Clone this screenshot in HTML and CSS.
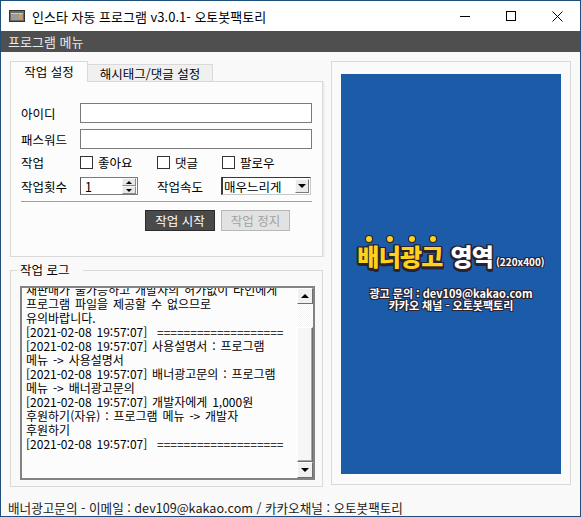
FILE: index.html
```html
<!DOCTYPE html>
<html lang="ko">
<head>
<meta charset="utf-8">
<title>인스타 자동 프로그램</title>
<link rel="stylesheet" href="styles.css">
</head>
<body>
<div class="window">
  <div class="titlebar">
    <svg class="app-icon" viewBox="0 0 16 12" width="16" height="12">
      <rect x="0.5" y="0.5" width="15" height="11" fill="#6a6a6a" stroke="#333"/>
      <rect x="2" y="3" width="12" height="7" fill="#9a9a9a"/>
      <rect x="2" y="3" width="12" height="1" fill="#c8c8c8"/>
      <rect x="10" y="5" width="3" height="4" fill="#e39a2a"/>
      <rect x="11" y="4" width="1" height="1" fill="#f2c24a"/>
    </svg>
    <span class="title">인스타 자동 프로그램 v3.0.1- 오토봇팩토리</span>
    <div class="controls">
      <span class="ctl"><svg width="10" height="10" viewBox="0 0 10 10"><line x1="0" y1="5.5" x2="10" y2="5.5" stroke="#000" stroke-width="1"/></svg></span>
      <span class="ctl"><svg width="10" height="10" viewBox="0 0 10 10"><rect x="0.5" y="0.5" width="9" height="9" fill="none" stroke="#000" stroke-width="1"/></svg></span>
      <span class="ctl"><svg width="11" height="11" viewBox="0 0 11 11"><path d="M0.5 0.5 L10.5 10.5 M10.5 0.5 L0.5 10.5" stroke="#000" stroke-width="1" fill="none"/></svg></span>
    </div>
  </div>
  <div class="menubar"><span>프로그램 메뉴</span></div>
  <div class="main">
    <div class="leftcol">
      <div class="tabs">
        <div class="tab tab-active">작업 설정</div>
        <div class="tab tab-idle">해시태그/댓글 설정</div>
      </div>
      <div class="tabpanel">
        <div class="row row-input">
          <span class="lbl">아이디</span>
          <span class="textbox"></span>
        </div>
        <div class="row row-input">
          <span class="lbl">패스워드</span>
          <span class="textbox"></span>
        </div>
        <div class="row row-check">
          <span class="lbl">작업</span>
          <span class="opt opt1"><span class="cb"></span>좋아요</span>
          <span class="opt opt2"><span class="cb"></span>댓글</span>
          <span class="opt"><span class="cb"></span>팔로우</span>
        </div>
        <div class="row row-spin">
          <span class="lbl">작업횟수</span>
          <span class="spin">
            <span class="spin-val">1</span>
            <span class="spin-btns">
              <span class="sb"><span class="tri-up"></span></span>
              <span class="sb"><span class="tri-down"></span></span>
            </span>
          </span>
          <span class="lbl2">작업속도</span>
          <span class="select">
            <span class="select-val">매우느리게</span>
            <span class="select-btn"><span class="tri-down big"></span></span>
          </span>
        </div>
        <div class="sep"></div>
        <div class="btnrow">
          <span class="btn btn-start">작업 시작</span>
          <span class="btn btn-stop">작업 정지</span>
        </div>
      </div>
      <fieldset class="logbox">
        <legend>작업 로그</legend>
        <div class="log">
          <div class="logtext">
            <div class="lines">
              <div class="ln">재판매가 불가능하고 개발자의 허가없이 타인에게</div>
              <div class="ln">프로그램 파일을 제공할 수 없으므로</div>
              <div class="ln">유의바랍니다.</div>
              <div class="ln">[2021-02-08 19:57:07]  <span class="rule">===================</span></div>
              <div class="ln">[2021-02-08 19:57:07] 사용설명서 : 프로그램</div>
              <div class="ln">메뉴 -&gt; 사용설명서</div>
              <div class="ln">[2021-02-08 19:57:07] 배너광고문의 : 프로그램</div>
              <div class="ln">메뉴 -&gt; 배너광고문의</div>
              <div class="ln">[2021-02-08 19:57:07] 개발자에게 1,000원</div>
              <div class="ln">후원하기(자유) : 프로그램 메뉴 -&gt; 개발자</div>
              <div class="ln">후원하기</div>
              <div class="ln">[2021-02-08 19:57:07]  <span class="rule">===================</span></div>
            </div>
          </div>
          <div class="vscroll">
            <span class="sbtn"><span class="tri-up big"></span></span>
            <span class="track"></span>
            <span class="thumb"></span>
            <span class="sbtn"><span class="tri-down big"></span></span>
          </div>
        </div>
      </fieldset>
    </div>
    <div class="adpanel">
      <div class="banner">
        <div class="ad-title">
          <span class="ad-yellow"><span class="syl">배</span><span class="syl">너</span><span class="syl">광</span><span class="syl">고</span></span>
          <span class="ad-white">영역</span>
          <span class="ad-size">(220x400)</span>
        </div>
        <div class="ad-line">광고 문의 : dev109@kakao.com</div>
        <div class="ad-line">카카오 채널 - 오토봇팩토리</div>
      </div>
    </div>
  </div>
  <div class="statusbar">배너광고문의 - 이메일 : dev109@kakao.com / 카카오채널 : 오토봇팩토리</div>
</div>
</body>
</html>
```

FILE: styles.css
```css
* { box-sizing: border-box; }

body {
  margin: 0;
  background: #ffffff;
  font-family: "Noto Sans CJK KR", "Noto Sans", sans-serif;
  color: #000;
}

.window {
  width: 581px;
  height: 517px;
  border: 1px solid #1d4f7a;
  background: #f9f9f9;
  display: flex;
  flex-direction: column;
  overflow: hidden;
}

/* title bar */
.titlebar {
  height: 30px;
  flex-shrink: 0;
  background: #ffffff;
  display: flex;
  align-items: center;
}
.app-icon { margin-left: 8px; flex-shrink: 0; }
.title {
  margin-left: 7px;
  font-size: 13px;
  line-height: 15px;
  color: #000;
}
.controls {
  margin-left: auto;
  display: flex;
  height: 100%;
}
.ctl {
  width: 46px;
  display: flex;
  align-items: center;
  justify-content: center;
}
.ctl svg { display: block; }

/* menu bar */
.menubar {
  height: 21px;
  flex-shrink: 0;
  background: #4f4f4f;
  color: #e9e9e9;
  font-size: 13px;
  display: flex;
  align-items: center;
  padding-left: 7px;
}

/* main */
.main {
  flex: 1;
  display: flex;
  padding: 9px 0 0 9px;
  gap: 8px;
}
.leftcol {
  width: 313px;
  display: flex;
  flex-direction: column;
}

/* tabs */
.tabs {
  height: 20px;
  display: flex;
  align-items: flex-end;
  position: relative;
  z-index: 1;
}
.tab {
  font-size: 12.5px;
  display: flex;
  align-items: center;
  justify-content: center;
  border: 1px solid #d9d9d9;
  border-bottom: none;
}
.tab-active {
  width: 78px;
  height: 21px;
  margin-bottom: -1px;
  background: #fcfcfc;
  padding-bottom: 1px;
}
.tab-idle {
  width: 125px;
  height: 17px;
  border-left: none;
  background: #f0f0f0;
}

.tabpanel {
  height: 176px;
  border: 1px solid #d9d9d9;
  background: #fcfcfc;
  padding: 21px 10px 0 10px;
  box-shadow: 1px 0 0 #ececec, 2px 0 0 #f1f1f1;
  font-size: 12.5px;
}
.row {
  display: flex;
  align-items: center;
}
.lbl { width: 59px; flex-shrink: 0; }
.row-input { height: 20px; margin-bottom: 6px; }
.textbox {
  width: 232px;
  height: 20px;
  border: 1px solid #7a7a7a;
  background: #ffffff;
}
.row-check { height: 18px; margin-top: -2px; }
.opt { display: flex; align-items: center; }
.opt1 { width: 77px; }
.opt2 { width: 65px; }
.cb {
  width: 13px;
  height: 13px;
  border: 1px solid #333;
  background: #fff;
  margin-right: 5px;
}
.row-spin { height: 18px; margin-top: 6px; }
.spin {
  width: 58px;
  height: 18px;
  border: 1px solid #7a7a7a;
  border-left-color: #555;
  background: #fff;
  display: flex;
  align-items: center;
  padding: 0 1px 0 4px;
}
.spin-val { flex: 1; }
.spin-btns {
  width: 14px;
  height: 16px;
  display: flex;
  flex-direction: column;
}
.sb {
  flex: 1;
  background: #e8e8e8;
  border: 1px solid;
  border-color: #f6f6f6 #8a8a8a #8a8a8a #f6f6f6;
  display: flex;
  align-items: center;
  justify-content: center;
}
.tri-up {
  width: 0; height: 0;
  border-left: 3px solid transparent;
  border-right: 3px solid transparent;
  border-bottom: 3px solid #000;
}
.tri-down {
  width: 0; height: 0;
  border-left: 3px solid transparent;
  border-right: 3px solid transparent;
  border-top: 3px solid #000;
}
.tri-up.big { border-left-width: 4px; border-right-width: 4px; border-bottom-width: 4px; }
.tri-down.big { border-left-width: 4px; border-right-width: 4px; border-top-width: 4px; }
.lbl2 { margin-left: 19px; width: 64px; flex-shrink: 0; }
.select {
  width: 90px;
  height: 18px;
  background: #fff;
  border-style: solid;
  border-width: 1px 1px 1px 2px;
  border-color: #3a3a3a #c8c8c8 #c8c8c8 #3a3a3a;
  display: flex;
  align-items: center;
  padding: 0 1px 0 1px;
}
.select-val { flex: 1; }
.select-btn {
  width: 14px;
  height: 14px;
  background: #ebebeb;
  border: 1px solid;
  border-color: #fafafa #7a7a7a #7a7a7a #fafafa;
  display: flex;
  align-items: center;
  justify-content: center;
}
.sep {
  height: 1px;
  background: #a0a0a0;
  margin-top: 6px;
}
.btnrow {
  margin-top: 8px;
  padding-left: 124px;
  display: flex;
  gap: 6px;
}
.btn {
  height: 21px;
  display: flex;
  align-items: center;
  justify-content: center;
  font-size: 12.5px;
}
.btn-start {
  width: 70px;
  background: #4a4a4a;
  border: 1px solid #2c2c2c;
  color: #ffffff;
}
.btn-stop {
  width: 69px;
  background: #e2e2e2;
  border: 1px solid #b8b8b8;
  color: #a2a2a2;
}

/* log group */
.logbox {
  margin: 6px 0 0 0;
  border: 1px solid #d9d9d9;
  padding: 0 7px 6px 9px;
  min-width: 0;
}
.logbox legend {
  font-size: 12.5px;
  line-height: 14px;
  padding: 0 13px 0 3px;
  margin-left: -3px;
}
.log {
  margin-top: 9px;
  height: 194px;
  border: 2px solid #838383;
  background: #fcfcfc;
  display: flex;
}
.logtext {
  flex: 1;
  overflow: hidden;
  padding-left: 4px;
  font-size: 12px;
  line-height: 14px;
  word-spacing: 1.5px;
  color: #000;
}
.lines { margin-top: -5px; }
.ln { white-space: pre; }
.rule { letter-spacing: 0; }
.vscroll {
  width: 16px;
  display: flex;
  flex-direction: column;
}
.sbtn {
  height: 16px;
  flex-shrink: 0;
  background: #f0f0f0;
  border: 1px solid;
  border-color: #ffffff #6e6e6e #6e6e6e #ffffff;
  display: flex;
  align-items: center;
  justify-content: center;
}
.track {
  height: 23px;
  flex-shrink: 0;
  background: repeating-conic-gradient(#f4f4f4 0 25%, #ffffff 0 50%) 0 0 / 2px 2px;
}
.thumb {
  flex: 1;
  background: #f6f6f6;
  border: 1px solid;
  border-color: #ffffff #6e6e6e #6e6e6e #ffffff;
  box-shadow: inset -1px -1px 0 #a8a8a8;
}

/* ad panel */
.adpanel {
  width: 240px;
  height: 424px;
  border: 1px solid #d9d9d9;
  background: #fafafa;
  padding: 12px 9px 10px 9px;
}
.banner {
  width: 220px;
  height: 400px;
  background: #1b5ba8;
  display: flex;
  flex-direction: column;
  align-items: center;
  justify-content: center;
  padding-top: 4px;
  font-family: "Noto Sans CJK KR", sans-serif;
}
.ad-title {
  display: flex;
  align-items: baseline;
  justify-content: center;
  line-height: 30px;
  margin-bottom: 10px;
}
.ad-yellow, .ad-white {
  font-size: 24px;
  font-weight: 900;
  letter-spacing: -0.8px;
  text-shadow:
    -1.5px -1.5px 0 #2a2231, 1.5px -1.5px 0 #2a2231,
    -1.5px 1.5px 0 #2a2231, 1.5px 1.5px 0 #2a2231,
    0 -1.5px 0 #2a2231, 0 1.5px 0 #2a2231,
    -1.5px 0 0 #2a2231, 1.5px 0 0 #2a2231,
    0 2.5px 0 #2a2231, 1px 3px 0 #2a2231;
}
.ad-yellow { color: #ffd21c; }
.ad-white { color: #ffffff; margin-left: 8px; }
.syl { position: relative; display: inline-block; }
.syl::before {
  content: "";
  position: absolute;
  left: 50%;
  top: -5px;
  width: 6px;
  height: 6px;
  margin-left: -2px;
  border-radius: 50%;
  background: #ffd21c;
  box-shadow: 0 0 0 1px #2a2231;
}
.ad-size {
  font-size: 10px;
  font-weight: 700;
  color: #ffffff;
  margin-left: 3px;
  text-shadow:
    -1px -1px 0 #2a2231, 1px -1px 0 #2a2231,
    -1px 1px 0 #2a2231, 1px 1px 0 #2a2231;
}
.ad-line {
  font-size: 11px;
  font-weight: 700;
  line-height: 12px;
  color: #ffffff;
  text-shadow:
    -1px -1px 0 #2a2231, 1px -1px 0 #2a2231,
    -1px 1px 0 #2a2231, 1px 1px 0 #2a2231,
    0 1px 0 #2a2231;
}

/* status bar */
.statusbar {
  height: 21px;
  flex-shrink: 0;
  display: flex;
  align-items: center;
  padding: 3px 0 0 7px;
  font-size: 12.6px;
  color: #1a1a1a;
}
```
